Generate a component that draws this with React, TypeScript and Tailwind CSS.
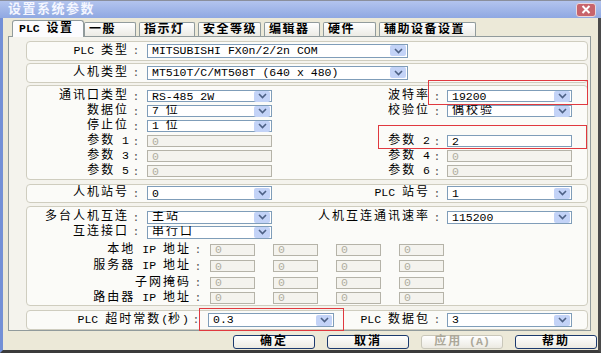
import React from "react";

const CJK = /([\u3000-\u9fff\uff00-\uffef]+)/;

function T({ s, tr = "tracking-[2px]" }: { s: string; tr?: string }) {
  const parts = s.split(CJK);
  return (
    <span className="whitespace-pre">
      {parts.map((p, i) =>
        CJK.test(p) ? (
          <span key={i} className={`text-[12px] ${tr}`}>
            {p}
          </span>
        ) : (
          <span key={i}>{p}</span>
        )
      )}
    </span>
  );
}

function Arrow() {
  return (
    <span className="mr-[1px] flex h-[11px] w-[16px] shrink-0 items-center justify-center rounded-[2px] bg-[#c3d3f7]">
      <svg width="9" height="6" viewBox="0 0 9 6">
        <path d="M1 1 L4.5 4.5 L8 1" fill="none" stroke="#4d6185" strokeWidth="1.6" />
      </svg>
    </span>
  );
}

function Select({ value, w, h = "h-[14px]" }: { value: string; w: string; h?: string }) {
  return (
    <div className={`flex ${w} ${h} shrink-0 items-center border border-[#7f9db9] bg-white pl-[4px]`}>
      <span className="flex-1 overflow-hidden whitespace-nowrap leading-none">
        <T s={value} />
      </span>
      <Arrow />
    </div>
  );
}

function Input({ value, w = "w-[125px]", disabled = true }: { value: string; w?: string; disabled?: boolean }) {
  return (
    <div
      className={`flex ${w} h-[12px] shrink-0 items-center border pl-[4px] leading-none ${
        disabled ? "border-[#b5b3a8] bg-[#f4f3ee] text-[#b0ad9f]" : "border-[#7f9db9] bg-white"
      }`}
    >
      {value}
    </div>
  );
}

function Label({ s, w }: { s: string; w: string }) {
  return (
    <>
      <div className={`${w} shrink-0 whitespace-nowrap text-right leading-none`}>
        <T s={s} />
      </div>
      <div className="w-[14px] shrink-0 text-center leading-none text-[#555]">:</div>
    </>
  );
}

function Group({ className, children }: { className: string; children: React.ReactNode }) {
  return (
    <div className={`w-[562px] rounded-[4px] border border-[#cfcdbf] bg-[#fbfbf8] ${className}`}>{children}</div>
  );
}

const tabs = [
  { t: "一般", w: "w-[52px]" },
  { t: "指示灯", w: "w-[56px]" },
  { t: "安全等级", w: "w-[63px]" },
  { t: "编辑器", w: "w-[56px]" },
  { t: "硬件", w: "w-[53px]" },
  { t: "辅助设备设置", w: "w-[97px]" },
];

function IpRow({ label, h }: { label: string; h: string }) {
  return (
    <div className={`flex ${h} items-center`}>
      <Label s={label} w="w-[164px]" />
      <div className="ml-[5px] flex gap-[18px]">
        {[0, 1, 2, 3].map((i) => (
          <Input key={i} value="0" w="w-[45px]" />
        ))}
      </div>
    </div>
  );
}

export default function App() {
  const font = "font-['Liberation_Mono','Noto_Sans_CJK_SC',monospace]";
  const sel = (v: string) => <Select value={v} w="w-[125px]" h="h-[12px]" />;
  return (
    <div className={`relative flex h-[353px] w-[601px] flex-col overflow-hidden bg-[#ece9d8] text-[11.5px] text-black ${font}`}>
      {/* title bar */}
      <div className="flex h-[18px] shrink-0 items-center border-t border-[#8a8f9c] bg-gradient-to-b from-[#b3c4ee] to-[#8fa8e2] pl-[8px] pr-[5px]">
        <span className="flex-1 text-[13px] font-bold leading-none tracking-[1.5px] text-[#f4f6ff]">设置系统参数</span>
        <div className="flex h-[14px] w-[20px] items-center justify-center rounded-[3px] border border-[#e8d8dc] bg-[#c8646c]">
          <svg width="10" height="9" viewBox="0 0 10 9">
            <path d="M1.5 1 L8.5 8 M8.5 1 L1.5 8" stroke="#fff" strokeWidth="2" />
          </svg>
        </div>
      </div>

      <div className="flex flex-1 flex-col border-b-[3px] border-l-[3px] border-r-[3px] border-b-[#3b3b3b] border-l-[#7390d6] border-r-[#4a4a4a] pl-[5px]">
        {/* tabs */}
        <div className="mt-[2px] flex h-[16px] items-end pl-[4px]">
          <div className="z-10 mb-[-1px] flex h-[17px] w-[72px] items-center whitespace-nowrap rounded-t-[3px] border border-b-0 border-[#919b9c] bg-[#fcfcfe] pl-[6px] font-bold leading-none">
            <T s="PLC 设置" tr="tracking-[1.5px]" />
          </div>
          {tabs.map((t, i) => (
            <div
              key={t.t}
              className={`${t.w} ${i === 0 ? "ml-[0px]" : "ml-[3px]"} flex h-[14px] items-center overflow-hidden whitespace-nowrap rounded-t-[2px] border border-b-0 border-[#919b9c] bg-gradient-to-b from-[#ffffff] to-[#ecebe5] pl-[4px] font-bold leading-none`}
            >
              <T s={t.t} tr="tracking-[1.5px]" />
            </div>
          ))}
        </div>

        {/* panel */}
        <div className="flex h-[295px] w-[583px] flex-col border border-[#919b9c] bg-[#f4f3ed] pl-[17px] pt-[4px]">
          <Group className="flex h-[21px] items-center">
            <Label s="PLC 类型" w="w-[102px]" />
            <div className="ml-[4px]">
              <Select value="MITSUBISHI FX0n/2/2n COM" w="w-[261px]" />
            </div>
          </Group>

          <Group className="mt-[2px] flex h-[21px] items-center">
            <Label s="人机类型" w="w-[102px]" />
            <div className="ml-[4px]">
              <Select value="MT510T/C/MT508T (640 x 480)" w="w-[261px]" />
            </div>
          </Group>

          <Group className="mt-[2px] flex h-[95px] flex-col pt-[3px]">
            {[
              { l: "通讯口类型", lc: sel("RS-485 2W"), r: "波特率", rc: sel("19200") },
              { l: "数据位", lc: sel("7 位"), r: "校验位", rc: sel("偶校验") },
              { l: "停止位", lc: sel("1 位"), r: "", rc: null },
              { l: "参数 1", lc: <Input value="0" />, r: "参数 2", rc: <Input value="2" disabled={false} /> },
              { l: "参数 3", lc: <Input value="0" />, r: "参数 4", rc: <Input value="0" /> },
              { l: "参数 5", lc: <Input value="0" />, r: "参数 6", rc: <Input value="0" /> },
            ].map((row) => (
              <div key={row.l} className="flex h-[15px] items-center">
                <Label s={row.l} w="w-[102px]" />
                <div className="ml-[4px]">{row.lc}</div>
                {row.rc && (
                  <>
                    <Label s={row.r} w="w-[158px]" />
                    <div className="ml-[3px]">{row.rc}</div>
                  </>
                )}
              </div>
            ))}
          </Group>

          <Group className="mt-[4px] flex h-[20px] items-center">
            <Label s="人机站号" w="w-[102px]" />
            <div className="ml-[4px]">
              <Select value="0" w="w-[125px]" />
            </div>
            <Label s="PLC 站号" w="w-[158px]" />
            <div className="ml-[3px]">
              <Select value="1" w="w-[125px]" />
            </div>
          </Group>

          <Group className="mt-[3px] flex h-[100px] flex-col pt-[3px]">
            <div className="flex h-[15px] items-center">
              <Label s="多台人机互连" w="w-[102px]" />
              <div className="ml-[4px]">
                <Select value="主站" w="w-[125px]" h="h-[13px]" />
              </div>
              <Label s="人机互连通讯速率" w="w-[158px]" />
              <div className="ml-[3px]">
                <Select value="115200" w="w-[125px]" h="h-[13px]" />
              </div>
            </div>
            <div className="flex h-[15px] items-center">
              <Label s="互连接口" w="w-[102px]" />
              <div className="ml-[4px]">
                <Select value="串行口" w="w-[125px]" h="h-[13px]" />
              </div>
            </div>
            <div className="mt-[2px]" />
            <IpRow label="本地 IP 地址" h="h-[17px]" />
            <IpRow label="服务器 IP 地址" h="h-[17px]" />
            <IpRow label="子网掩码" h="h-[16px]" />
            <IpRow label="路由器 IP 地址" h="h-[15px]" />
          </Group>

          <Group className="mt-[4px] flex h-[21px] items-center">
            <Label s="PLC 超时常数(秒)" w="w-[162px]" />
            <div className="ml-[5px]">
              <Select value="0.3" w="w-[126px]" />
            </div>
            <Label s="PLC 数据包" w="w-[96px]" />
            <div className="ml-[3px]">
              <Select value="3" w="w-[125px]" />
            </div>
          </Group>
        </div>

        {/* buttons */}
        <div className="mt-[4px] flex justify-end gap-[12px] pr-[1px]">
          {[
            { t: "确定", d: false },
            { t: "取消", d: false },
            { t: "应用 (A)", d: true },
            { t: "帮助", d: false },
          ].map((b) => (
            <div
              key={b.t}
              className={`flex h-[14px] w-[82px] items-center justify-center rounded-[3px] border bg-gradient-to-b from-white to-[#eceae2] font-bold leading-none ${
                b.d ? "border-[#c9c7ba] text-[#aca899]" : "border-[#1c3a6e] text-black"
              }`}
            >
              <T s={b.t} />
            </div>
          ))}
        </div>
      </div>

      {/* red highlight boxes */}
      <div className="absolute left-[428px] top-[80px] h-[25px] w-[160px] border border-[#e0393f]" />
      <div className="absolute left-[378px] top-[125px] h-[24px] w-[209px] border border-[#e0393f]" />
      <div className="absolute left-[199px] top-[308px] h-[23px] w-[145px] border border-[#e0393f]" />
    </div>
  );
}
